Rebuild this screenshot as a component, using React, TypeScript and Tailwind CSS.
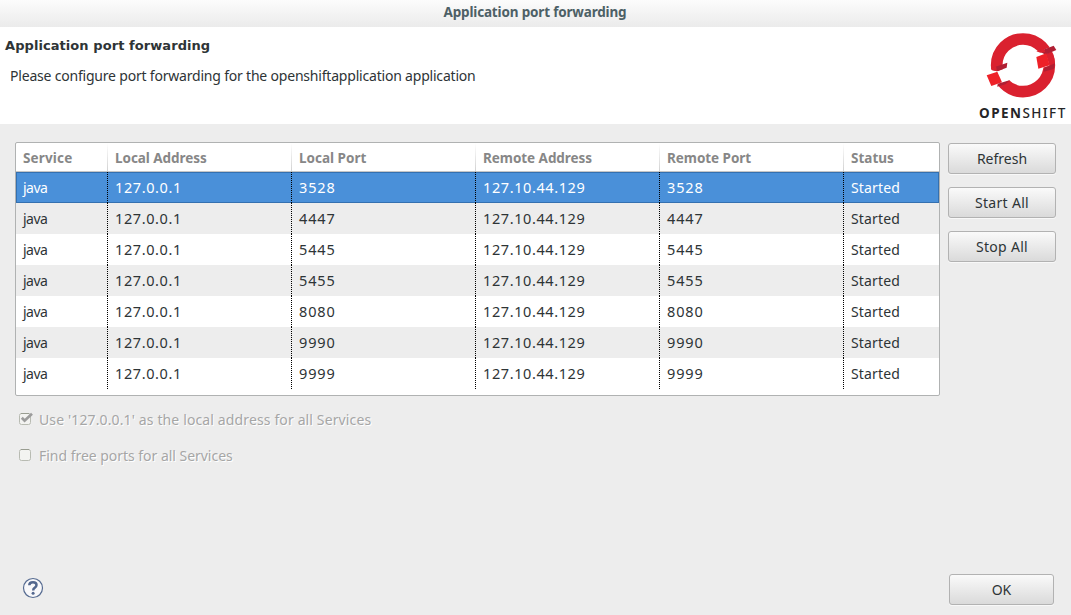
import React from "react";

const columns = [
  { label: "Service", width: "w-[92px]", tracking: "tracking-[0.15px]" },
  { label: "Local Address", width: "w-[184px]", tracking: "tracking-[-0.05px]" },
  { label: "Local Port", width: "w-[184px]", tracking: "tracking-[0px]" },
  { label: "Remote Address", width: "w-[184px]", tracking: "tracking-[-0.05px]" },
  { label: "Remote Port", width: "w-[184px]", tracking: "tracking-[-0.05px]" },
  { label: "Status", width: "w-[95px]", tracking: "tracking-[0px]" },
];

const cellText = [
  "text-[14px] leading-[32px] tracking-[-0.5px]",
  "text-[14.5px] leading-[30px] tracking-[0.6px]",
  "text-[14.5px] leading-[30px] tracking-[0.85px]",
  "text-[14.5px] leading-[30px] tracking-[0.6px]",
  "text-[14.5px] leading-[30px] tracking-[0.85px]",
  "text-[14px] leading-[32px] tracking-[0.15px]",
];

const ports = ["3528", "4447", "5445", "5455", "8080", "9990", "9999"];

function Logo() {
  return (
    <svg width="72" height="66" viewBox="45 36 216 198" className="block">
      <circle cx="156" cy="136" r="79" fill="none" stroke="#da212f" strokeWidth="35" />
      <path d="M50 151L76 141L80 154L110 142L116 181L78 198L50 198Z" fill="#fff" />
      <path d="M190 98L226 86L258 74L262 92L236 104L228 104L236 138L200 146Z" fill="#fff" />
      <path d="M224 102L243 94Q251 112 252 131L219 144L236 136Z" fill="#da212f" />
      <path d="M74 140L109 128L107 143L78 154L62 150L62 144Z" fill="#b01f33" />
      <path d="M60 144L75 139L78 154L62 150Z" fill="#da212f" />
      <path d="M47 166L79 155L93 187L61 198Z" fill="#ee2128" />
      <path d="M80 191L118 180L103 193L79 200Z" fill="#b01f33" />
      <path d="M205 94L248 77L256 90L223 104Z" fill="#b01f33" />
      <path d="M196 94L219 86L223 96L208 98Z" fill="#da212f" />
      <path d="M196 111L226 100L236 136L202 146Z" fill="#ee2128" />
      <path d="M220 143L252 130L248 147L218 155Z" fill="#b01f33" />
    </svg>
  );
}

function Button({ label, width, tracking }: { label: string; width: string; tracking: string }) {
  return (
    <button
      className={`${width} ${tracking} h-[31px] shrink-0 rounded-[3px] border border-[#b2b2b2] bg-linear-to-b from-[#fafafa] to-[#dadada] pt-px text-[14px] leading-[28px] shadow-[0_1px_0_#f8f8f8]`}
    >
      {label}
    </button>
  );
}

function Check({ checked, label, tracking }: { checked?: boolean; label: string; tracking: string }) {
  return (
    <label className="flex h-[20px] items-center text-[#a6a6a6] [text-shadow:1px_1px_0_#fff]">
      <svg width="16" height="16" viewBox="0 0 16 16" className="mr-[4px] -mt-[2px]">
        <rect x="0.500" y="2.500" width="11" height="11" rx="2" fill="#f3f3f1" stroke="#b8bbb2" />
        <path d="M2 2.500H10" stroke="#999d91" />
        {checked && <path d="M2.800 6.800L5.600 9.700L13 2.700" fill="none" stroke="#9c9c9c" strokeWidth="2.700" />}
      </svg>
      <span className={`whitespace-pre text-[14px] leading-[20px] ${tracking}`}>{label}</span>
    </label>
  );
}

export default function App() {
  return (
    <div className="flex h-[615px] w-[1071px] flex-col overflow-hidden bg-[#ededed] font-['Noto_Sans','Open_Sans',sans-serif] text-[14px] text-[#2e3436]">
      <header className="h-[27px] shrink-0 bg-linear-to-b from-[#fcfcfc] to-[#ebebeb] pr-px text-center text-[13.500px] leading-[24px] font-bold tracking-[-0.17px] text-[#4d6066]">
        Application port forwarding
      </header>
      <section className="flex h-[97px] shrink-0 justify-between bg-white">
        <div className="pt-[9px]">
          <h1 className="pl-[5px] font-['DejaVu_Sans',sans-serif] text-[13px] leading-[20px] font-bold tracking-[0.07px]">
            Application port forwarding
          </h1>
          <p className="pt-[10px] pl-[10px] text-[14px] leading-[20px] tracking-[-0.2px]">
            Please configure port forwarding for the openshiftapplication application
          </p>
        </div>
        <div className="flex w-[95px] flex-col pt-[5px]">
          <div className="pl-[10px]">
            <Logo />
          </div>
          <div className="mt-[6px] pl-[3px] text-[13.500px] leading-[19px] font-medium tracking-[1.45px] whitespace-nowrap text-[#252527]">
            <b>OPEN</b>SHIFT
          </div>
        </div>
      </section>
      <main className="flex h-[272px] shrink-0 gap-[8px] pt-[18px] pl-[15px]">
        <div className="h-[254px] w-[925px] rounded-[2px] border border-[#b0b2b2] bg-white">
          <div className="flex h-[29px] border-b border-[#c6c6c6]">
            {columns.map((c, i) => (
              <div
                key={c.label}
                className={`${c.width} ${c.tracking} flex shrink-0 text-[13.500px] leading-[31px] font-bold whitespace-nowrap text-[#878787] ${i === 0 ? "pl-[7px]" : ""}`}
              >
                {i > 0 && <i className="mr-[7px] -ml-px h-[28px] w-px bg-linear-to-b from-white to-[#d2d2d2]" />}
                {c.label}
              </div>
            ))}
          </div>
          {ports.map((port, r) => {
            const cells = ["java", "127.0.0.1", port, "127.10.44.129", port, "Started"];
            return (
              <div
                key={port}
                className={`flex h-[31px] ${r === 0 ? "bg-[#4a90d9] text-white shadow-[inset_0_0_0_1px_#3470b0]" : r % 2 ? "bg-[#ededed]" : "bg-white"}`}
              >
                {cells.map((cell, i) => (
                  <div
                    key={i}
                    className={`${columns[i].width} ${cellText[i]} flex shrink-0 ${i === 0 ? "pl-[7px]" : ""}`}
                  >
                    {i > 0 && (
                      <i className="mr-[7px] -ml-px h-[31px] w-px bg-[repeating-linear-gradient(to_bottom,#000_0,#000_1px,transparent_1px,transparent_2px)]" />
                    )}
                    {cell}
                  </div>
                ))}
              </div>
            );
          })}
        </div>
        <div className="flex flex-col gap-[13px] pt-px">
          <Button label="Refresh" width="w-[108px]" tracking="tracking-[0px]" />
          <Button label="Start All" width="w-[108px]" tracking="tracking-[0.3px]" />
          <Button label="Stop All" width="w-[108px]" tracking="tracking-[0.3px]" />
        </div>
      </main>
      <div className="flex flex-col gap-[16px] pt-[14px] pl-[19px]">
        <Check checked label="Use '127.0.0.1' as the local address for all Services" tracking="tracking-[0.13px]" />
        <Check label="Find free ports for all Services" tracking="tracking-[-0.03px]" />
      </div>
      <footer className="mt-auto flex items-center justify-between pr-[17px] pb-[10px] pl-[22px]">
        <svg width="22" height="22" viewBox="0 0 22 22" className="-mt-[3px]">
          <circle cx="11" cy="11" r="9.500" fill="#f8f8fa" stroke="#566b91" strokeWidth="1.200" />
          <path d="M7.300 8.300Q7.300 5.200 11 5.200Q14.500 5.200 14.500 8Q14.500 9.700 12.600 10.900Q11.200 11.700 11.200 13.400" fill="none" stroke="#53678e" strokeWidth="2.500" />
          <circle cx="11.100" cy="16.200" r="1.500" fill="#53678e" />
        </svg>
        <Button label="OK" width="w-[105px]" tracking="tracking-[0px]" />
      </footer>
    </div>
  );
}
